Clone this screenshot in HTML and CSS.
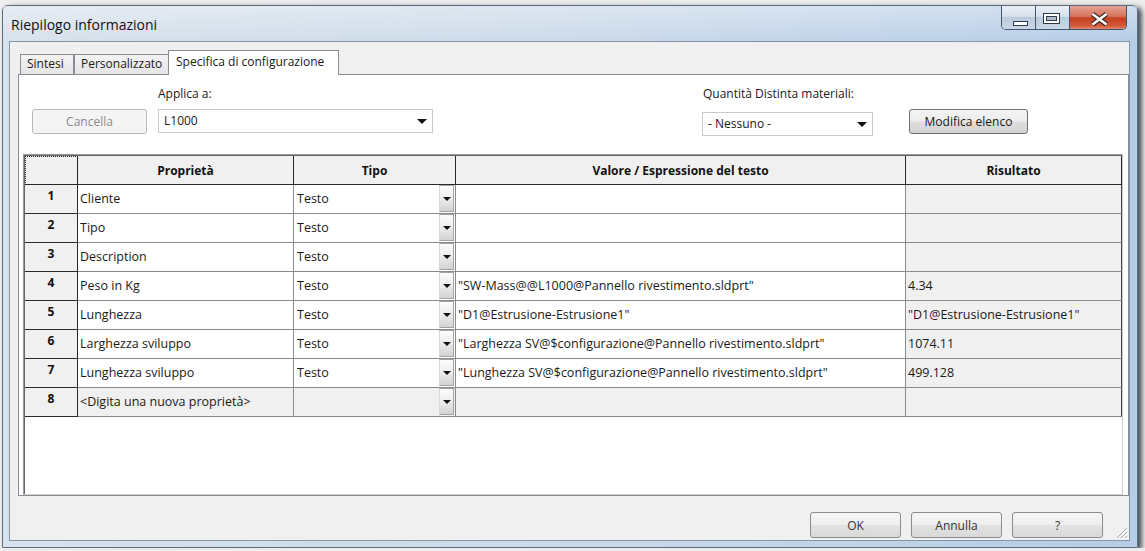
FILE: index.html
```html
<!DOCTYPE html>
<html lang="it">
<head>
  <meta charset="UTF-8">
  <title>Riepilogo informazioni</title>
  <link rel="stylesheet" href="styles.css">
</head>
<body>

  <div class="window">
    <div class="titlebar">
      <span class="title">Riepilogo informazioni</span>
      <div class="caption">
        <span class="cap-btn cap-min">
          <svg width="35" height="24" viewBox="0 0 35 24"><rect x="11.5" y="15.5" width="14" height="4" fill="#fff" stroke="#2e3b4c"/></svg>
        </span>
        <span class="cap-btn cap-max">
          <svg width="34" height="24" viewBox="0 0 34 24"><rect x="7.5" y="7.5" width="16" height="10" fill="#fff" stroke="#2e3b4c"/><rect x="10.5" y="10.5" width="10" height="4" fill="#aebdcd" stroke="#2e3b4c"/></svg>
        </span>
        <span class="cap-btn cap-close">
          <svg width="56" height="24" viewBox="0 0 56 24"><path d="M22.5 8 L36.5 18.5 M36.5 8 L22.5 18.5" stroke="#3b2a26" stroke-width="5"/><path d="M22.5 8 L36.5 18.5 M36.5 8 L22.5 18.5" stroke="#fff" stroke-width="2.6"/></svg>
        </span>
      </div>
    </div>

    <div class="client">
      <div class="tabs">
        <span class="tab tab-sintesi">Sintesi</span>
        <span class="tab tab-pers">Personalizzato</span>
        <span class="tab tab-active">Specifica di configurazione</span>
      </div>

      <div class="panel">
        <div class="toolbar">
          <button class="btn btn-cancel" disabled>Cancella</button>
          <div class="field field-applica">
            <label>Applica a:</label>
            <div class="combo">L1000<span class="arrow"></span></div>
          </div>
          <div class="field field-qty">
            <label>Quantità Distinta materiali:</label>
            <div class="combo">- Nessuno -<span class="arrow"></span></div>
          </div>
          <button class="btn btn-modify">Modifica elenco</button>
        </div>

        <div class="grid">
          <table>
            <colgroup>
              <col class="c-num">
              <col class="c-prop">
              <col class="c-type">
              <col class="c-value">
              <col class="c-result">
            </colgroup>
            <tr class="head">
              <th class="corner"></th>
              <th>Proprietà</th>
              <th>Tipo</th>
              <th>Valore / Espressione del testo</th>
              <th>Risultato</th>
            </tr>
            <tr>
              <td class="num">1</td>
              <td class="cell">Cliente</td>
              <td class="type"><div class="type-in"><span>Testo</span><span class="drop"></span></div></td>
              <td class="cell"></td>
              <td class="cell result"></td>
            </tr>
            <tr>
              <td class="num">2</td>
              <td class="cell">Tipo</td>
              <td class="type"><div class="type-in"><span>Testo</span><span class="drop"></span></div></td>
              <td class="cell"></td>
              <td class="cell result"></td>
            </tr>
            <tr>
              <td class="num">3</td>
              <td class="cell">Description</td>
              <td class="type"><div class="type-in"><span>Testo</span><span class="drop"></span></div></td>
              <td class="cell"></td>
              <td class="cell result"></td>
            </tr>
            <tr>
              <td class="num">4</td>
              <td class="cell">Peso in Kg</td>
              <td class="type"><div class="type-in"><span>Testo</span><span class="drop"></span></div></td>
              <td class="cell">"SW-Mass@@L1000@Pannello rivestimento.sldprt"</td>
              <td class="cell result">4.34</td>
            </tr>
            <tr>
              <td class="num">5</td>
              <td class="cell">Lunghezza</td>
              <td class="type"><div class="type-in"><span>Testo</span><span class="drop"></span></div></td>
              <td class="cell">"D1@Estrusione-Estrusione1"</td>
              <td class="cell result">"D1@Estrusione-Estrusione1"</td>
            </tr>
            <tr>
              <td class="num">6</td>
              <td class="cell">Larghezza sviluppo</td>
              <td class="type"><div class="type-in"><span>Testo</span><span class="drop"></span></div></td>
              <td class="cell">"Larghezza SV@$configurazione@Pannello rivestimento.sldprt"</td>
              <td class="cell result">1074.11</td>
            </tr>
            <tr>
              <td class="num">7</td>
              <td class="cell">Lunghezza sviluppo</td>
              <td class="type"><div class="type-in"><span>Testo</span><span class="drop"></span></div></td>
              <td class="cell">"Lunghezza SV@$configurazione@Pannello rivestimento.sldprt"</td>
              <td class="cell result">499.128</td>
            </tr>
            <tr class="new-row">
              <td class="num">8</td>
              <td class="cell">&lt;Digita una nuova proprietà&gt;</td>
              <td class="type"><div class="type-in"><span></span><span class="drop"></span></div></td>
              <td class="cell"></td>
              <td class="cell result"></td>
            </tr>
          </table>
        </div>
      </div>

      <div class="footer">
        <button class="btn btn-foot">OK</button>
        <button class="btn btn-foot">Annulla</button>
        <button class="btn btn-foot">?</button>
        <svg class="grip" width="13" height="13" viewBox="0 0 13 13">
          <path d="M12 2 L2 12 M12 6 L6 12 M12 10 L10 12" stroke="#a8a8a8" stroke-width="1"/>
          <path d="M13 3 L3 13 M13 7 L7 13 M13 11 L11 13" stroke="#fff" stroke-width="1"/>
        </svg>
      </div>
    </div>
  </div>

</body>
</html>
```

FILE: styles.css
```css
* {
  box-sizing: border-box;
}

body {
  margin: 0;
  background: #ededed;
  font-family: "Open Sans", "Noto Sans", sans-serif;
  font-size: 12px;
  color: #1a1a1a;
  overflow: hidden;
}

/* window frame */

.window {
  margin: 5px 0 0 2px;
  width: 1136px;
  height: 543px;
  border: 1px solid #5d6d80;
  border-radius: 6px 6px 0 0;
  background: linear-gradient(to right, #d8e2ec, #cddbea 45%, #b6cde7);
  box-shadow: 4px 2px 5px rgba(35, 45, 58, 0.8);
  padding-bottom: 6px;
  display: flex;
  flex-direction: column;
}

.titlebar {
  height: 35px;
  display: flex;
  align-items: flex-start;
  padding-left: 8px;
  background: linear-gradient(to bottom, rgba(255, 255, 255, 0.35), rgba(255, 255, 255, 0));
}

.title {
  font-size: 14px;
  line-height: 20px;
  padding-top: 9px;
  color: #111;
}

.caption {
  margin-left: auto;
  margin-right: 10px;
  display: flex;
  height: 24px;
  border: 1px solid #44546a;
  border-top: none;
  border-radius: 0 0 5px 5px;
  overflow: hidden;
}

.cap-btn {
  display: block;
  height: 23px;
}

.cap-btn svg {
  display: block;
}

.cap-min,
.cap-max {
  width: 34px;
  background: linear-gradient(to bottom, #e9eff6, #d7e1ec 45%, #bccbdc 50%, #cad7e6);
  border-right: 1px solid #44546a;
}

.cap-close {
  width: 56px;
  background: linear-gradient(to bottom, #e6a395, #d6725b 45%, #c3401f 52%, #d2583a 85%, #e0886c);
}

/* client area */

.client {
  margin: 0 7px 0 6px;
  height: 500px;
  border: 1px solid #8595a8;
  background: #f0f0f0;
  padding-left: 8px;
  display: flex;
  flex-direction: column;
}

.tabs {
  height: 32px;
  padding-left: 2px;
  display: flex;
  align-items: flex-end;
}

.tab {
  height: 20px;
  line-height: 18px;
  padding-left: 6px;
  border: 1px solid #898c95;
  border-bottom: none;
  background: linear-gradient(to bottom, #f4f4f4, #e4e4e4);
  white-space: nowrap;
}

.tab-sintesi {
  width: 54px;
}

.tab-pers {
  width: 95px;
}

.tab-active {
  width: 171px;
  height: 25px;
  line-height: 22px;
  padding-left: 7px;
  margin-left: -1px;
  margin-bottom: -1px;
  background: #fff;
  position: relative;
  z-index: 1;
}

.panel {
  height: 422px;
  border: 1px solid #898c95;
  background: #fff;
  padding: 0 5px 0 4px;
  display: flex;
  flex-direction: column;
}

/* toolbar above the grid */

.toolbar {
  height: 79px;
  padding-left: 9px;
  display: flex;
  align-items: flex-start;
}

.btn {
  font-family: inherit;
  font-size: 12px;
  color: #1a1a1a;
  border: 1px solid #707070;
  border-radius: 3px;
  background: linear-gradient(to bottom, #f4f4f4, #ececec 48%, #dedede 52%, #d3d3d3);
  padding: 0;
}

.btn-cancel {
  width: 115px;
  height: 25px;
  margin-top: 34px;
  color: #8a8a8a;
  border-color: #b5b9bc;
  background: #f4f4f4;
}

.btn-modify {
  width: 119px;
  height: 25px;
  margin-top: 34px;
  margin-left: 36px;
}

.field label {
  display: block;
  line-height: 16px;
  padding-top: 11px;
}

.field-applica {
  width: 275px;
  margin-left: 11px;
}

.field-qty {
  width: 171px;
  margin-left: 269px;
}

.field-qty label {
  padding-left: 1px;
}

.combo {
  height: 24px;
  margin-top: 7px;
  line-height: 22px;
  padding-left: 5px;
  border: 1px solid #c9c9c9;
  background: #fff;
  display: flex;
  align-items: center;
  justify-content: space-between;
}

.field-qty .combo {
  margin-top: 10px;
}

.arrow {
  width: 0;
  height: 0;
  margin-right: 5px;
  border-left: 5px solid transparent;
  border-right: 5px solid transparent;
  border-top: 5px solid #111;
}

/* property grid */

.grid {
  flex: 1;
  background: #fff;
  border: 1px solid;
  border-color: #9a9a9a #cfcfcf #cfcfcf #9a9a9a;
  padding: 1px 0 0 1px;
  box-shadow: inset 1px 1px 0 #666;
}

table {
  width: 1097px;
  table-layout: fixed;
  border-collapse: separate;
  border-spacing: 0;
}

.c-num { width: 53px; }
.c-prop { width: 216px; }
.c-type { width: 162px; }
.c-value { width: 450px; }
.c-result { width: 216px; }

tr {
  height: 29px;
}

th {
  background: #f0f0f0;
  font-weight: 700;
  color: #111;
  border-right: 1px solid #2a2a2a;
  border-bottom: 1px solid #2a2a2a;
  padding: 0;
}

th.corner {
  outline: 1px dotted #222;
  outline-offset: -1px;
}

td {
  padding: 0;
  font-size: 12.5px;
  white-space: nowrap;
  overflow: hidden;
}

td.num {
  background: #f0f0f0;
  font-size: 12px;
  font-weight: 700;
  color: #111;
  text-align: center;
  vertical-align: top;
  line-height: 16px;
  padding-top: 3px;
  border-right: 1px solid #2a2a2a;
  border-bottom: 1px solid #2a2a2a;
}

td.cell,
td.type {
  border-right: 1px solid #8a8a8a;
  border-bottom: 1px solid #8a8a8a;
  line-height: 28px;
  padding-left: 2px;
}

td.type {
  padding-left: 0;
}

td.result,
.new-row td {
  background: #f0f0f0;
}

td.result {
  border-right-color: #444;
}

.type-in {
  height: 28px;
  display: flex;
}

.type-in span:first-child {
  flex: 1;
  padding-left: 3px;
}

.drop {
  width: 15px;
  height: 27px;
  margin-right: 1px;
  border: 1px solid #a3a3a3;
  border-left-color: #d8d8d8;
  background: linear-gradient(to bottom, #fdfdfd, #ececec 50%, #d2d2d2);
  display: flex;
  align-items: center;
  justify-content: center;
}

.drop::after {
  content: "";
  border-left: 4px solid transparent;
  border-right: 4px solid transparent;
  border-top: 4px solid #111;
}

/* bottom buttons */

.footer {
  height: 44px;
  padding: 16px 26px 0 0;
  display: flex;
  justify-content: flex-end;
  align-items: flex-start;
  gap: 10px;
  position: relative;
}

.btn-foot {
  width: 91px;
  height: 26px;
  border-color: #8c8c8c;
  background: linear-gradient(to bottom, #f6f6f6, #eeeeee 48%, #e2e2e2 52%, #d9d9d9);
  color: #333;
}

.grip {
  position: absolute;
  right: 1px;
  bottom: 1px;
}
```
